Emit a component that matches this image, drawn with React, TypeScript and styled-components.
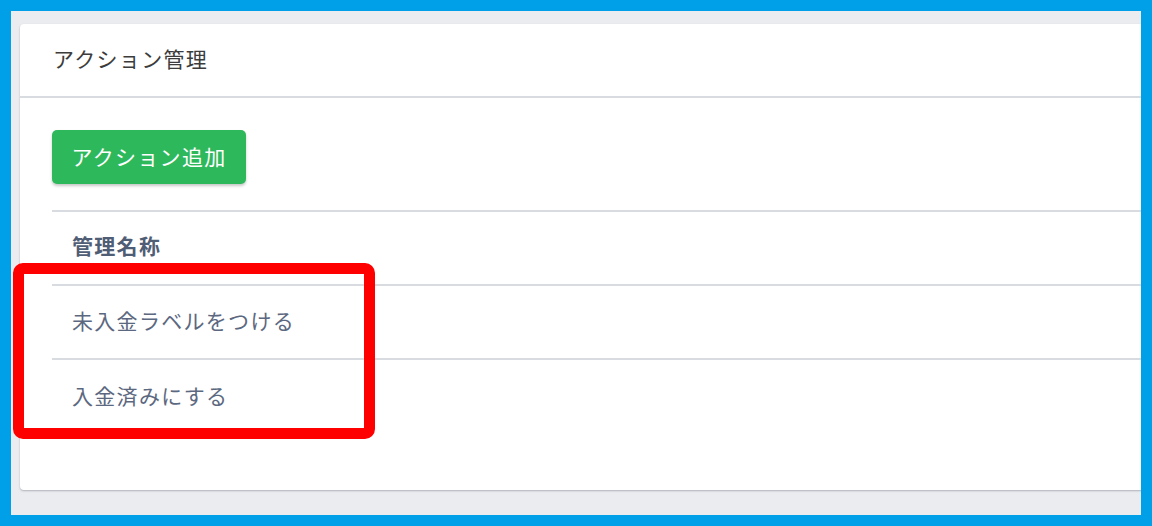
import React from 'react';
import styled, { createGlobalStyle } from 'styled-components';

const GlobalStyle = createGlobalStyle`
  * { box-sizing: border-box; }
  body {
    margin: 0;
    font-family: "Noto Sans CJK JP", "Noto Sans", sans-serif;
  }
`;

const Frame = styled.div`
  position: relative;
  display: flex;
  width: 1152px;
  height: 526px;
  border: 11px solid #00a0e9;
  background: #ebecef;
  padding: 13px 0 0 9px;
  overflow: hidden;
`;

const Card = styled.section`
  flex: 1;
  margin-right: -24px;
  height: 466px;
  background: #fff;
  border-radius: 4px;
  box-shadow: 0 1px 2px rgba(60, 70, 90, 0.35);
  display: flex;
  flex-direction: column;
`;

const CardHeader = styled.header`
  height: 74px;
  display: flex;
  align-items: center;
  padding: 0 0 5px 33px;
  border-bottom: 2px solid #d8dbe0;
  font-size: 21px;
  letter-spacing: 1.3px;
  color: #3c3c3c;
`;

const CardBody = styled.div`
  padding: 32px 0 32px 32px;
`;

const AddButton = styled.button`
  width: 194px;
  height: 54px;
  border: none;
  border-radius: 5px;
  background: #2eb85c;
  color: #fff;
  font-family: inherit;
  font-size: 21px;
  letter-spacing: 1.3px;
  padding: 0 0 2px;
  box-shadow: 0 2px 3px rgba(0, 0, 0, 0.22);
  cursor: pointer;
`;

const Table = styled.table`
  margin-top: 26px;
  width: 100%;
  border-collapse: collapse;
`;

const HeadCell = styled.th`
  height: 74px;
  padding: 0 0 6px 20px;
  text-align: left;
  font-size: 21px;
  font-weight: 700;
  letter-spacing: 1.3px;
  color: #4f5d75;
  border-top: 2px solid #d8dbe0;
`;

const Cell = styled.td`
  height: 74px;
  padding: 0 0 4px 20px;
  font-size: 21px;
  letter-spacing: 1.3px;
  color: #5c6880;
  border-top: 2px solid #d8dbe0;
`;

const Highlight = styled.div`
  position: absolute;
  left: 13px;
  top: 263px;
  width: 362px;
  height: 176px;
  border: 11px solid #ff0000;
  border-radius: 10px;
  pointer-events: none;
`;

const actions = ['未入金ラベルをつける', '入金済みにする'];

const App = () => {
  return (
    <>
      <GlobalStyle />
      <Frame>
        <Card>
          <CardHeader>アクション管理</CardHeader>
          <CardBody>
            <AddButton>アクション追加</AddButton>
            <Table>
              <thead>
                <tr>
                  <HeadCell>管理名称</HeadCell>
                </tr>
              </thead>
              <tbody>
                {actions.map((name) => (
                  <tr key={name}>
                    <Cell>{name}</Cell>
                  </tr>
                ))}
              </tbody>
            </Table>
          </CardBody>
        </Card>
      </Frame>
      <Highlight />
    </>
  );
};

export default App;
